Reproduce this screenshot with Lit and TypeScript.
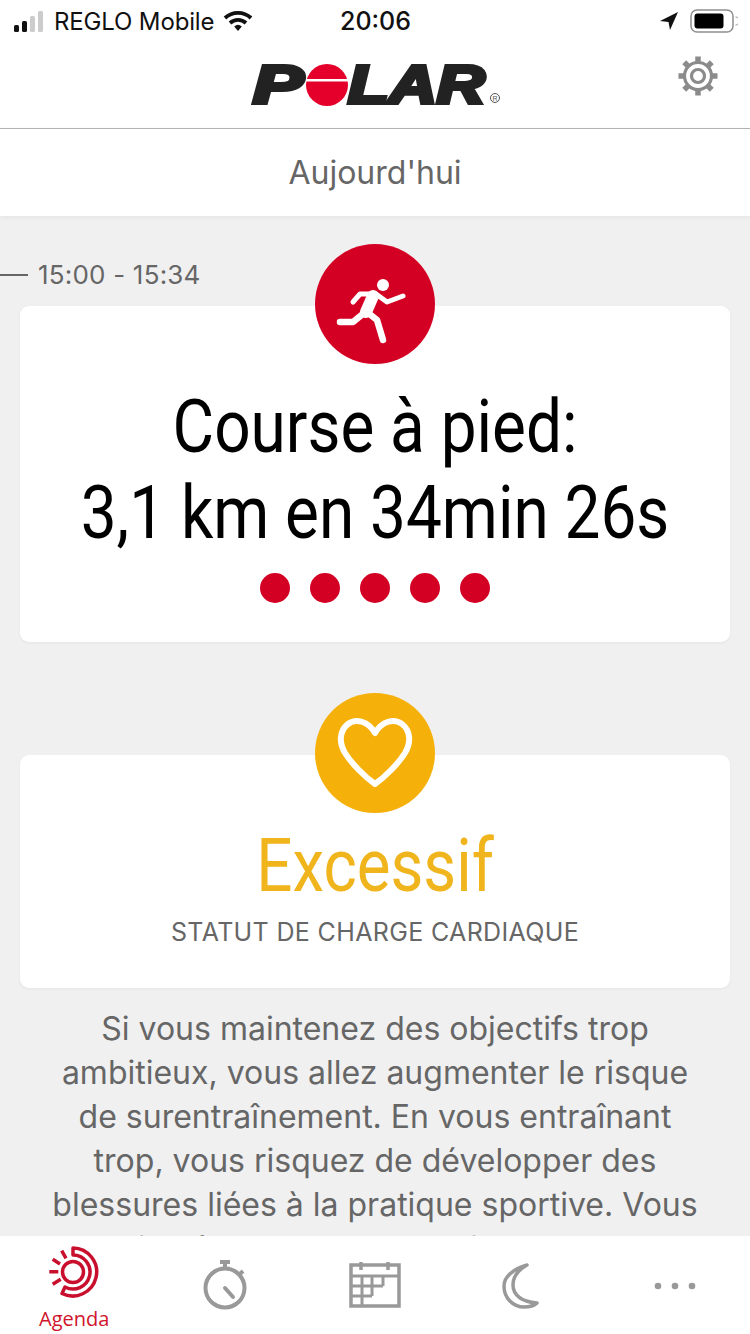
import { LitElement, html, css } from "lit";
import { customElement } from "lit/decorators.js";

const gearTeeth = () => {
  const parts: string[] = [];
  for (let i = 0; i < 8; i++) {
    const a = (i * Math.PI) / 4;
    const x1 = 24 + 14 * Math.sin(a), y1 = 24 - 14 * Math.cos(a);
    const x2 = 24 + 19.5 * Math.sin(a), y2 = 24 - 19.5 * Math.cos(a);
    parts.push(`M${x1.toFixed(1)} ${y1.toFixed(1)} L${x2.toFixed(1)} ${y2.toFixed(1)}`);
  }
  return parts.join(" ");
};

@customElement("app-root")
export class AppRoot extends LitElement {
  static styles = css`
    :host { display: block; width: 750px; height: 1334px; overflow: hidden; background: #fff; font-family: Inter, "Liberation Sans", sans-serif; }
    .page { display: flex; flex-direction: column; height: 1334px; }
    .status { height: 42px; flex: none; display: grid; grid-template-columns: 1fr auto 1fr; align-items: center; padding: 0 12px 0 13px; font-size: 24px; color: #111; }
    .status-left { display: flex; align-items: center; gap: 9px; }
    .status-left span { letter-spacing: -0.15px; }
    .status-right { display: flex; align-items: center; justify-content: flex-end; gap: 11px; }
    .clock { font-weight: 500; font-size: 25px; }
    .head { flex: none; position: relative; border-bottom: 1px solid #b5b5b5; display: flex; justify-content: center; align-items: flex-start; padding-top: 22px; height: 64px; }
    .logo { display: flex; align-items: center; height: 42px; width: 250px; position: relative; color: #222; font-family: "Liberation Sans", sans-serif; font-weight: 700; font-style: italic; font-size: 53px; line-height: 42px; -webkit-text-stroke: 4px #222; }
    .logo .p { flex: none; width: 53px; margin-left: 3px; transform: scaleX(1.42); transform-origin: left center; }
    .logo svg { flex: none; position: relative; }
    .logo .lar { flex: none; transform: scaleX(1.255); transform-origin: left center; }
    .logo .reg { position: absolute; left: 240px; top: 29px; width: 10px; height: 10px; border: 1px solid #555; border-radius: 50%; font: 7px/9px "Liberation Sans", sans-serif; color: #555; -webkit-text-stroke: 0; text-align: center; box-sizing: border-box; }
    .gear { position: absolute; right: 28px; top: 10px; }
    .today { flex: none; height: 87px; display: flex; align-items: center; justify-content: center; font-size: 32px; color: #666; box-shadow: 0 1px 6px rgba(0,0,0,.06); position: relative; z-index: 1; background: #fff; }
    .main { flex: 1; min-height: 0; overflow: hidden; background: #f0f0f1; display: flex; flex-direction: column; padding: 0 20px; }
    .main > * { flex: none; }
    .time { display: flex; align-items: center; gap: 10px; margin: 46px 0 18px -20px; font-size: 26px; color: #666; line-height: 26px; height: 26px; letter-spacing: .2px; }
    .time i { width: 28px; height: 2px; background: #666; display: block; }
    .card { position: relative; background: #fff; border-radius: 9px; box-shadow: 0 1px 3px rgba(0,0,0,.05); display: flex; flex-direction: column; align-items: center; }
    .badge { position: absolute; left: 295px; top: -62px; width: 120px; height: 120px; border-radius: 50%; }
    .red { background: #d40024; }
    .amber { background: #f5b00a; }
    .run { height: 336px; padding-top: 78px; box-sizing: border-box; }
    .big { font-family: Roboto, sans-serif; font-size: 74px; line-height: 86px; color: #000; transform: scaleX(.863); white-space: nowrap; text-align: center; }
    .dots { display: flex; gap: 20px; margin-top: 17px; }
    .dots b { width: 30px; height: 30px; border-radius: 50%; background: #d40024; display: block; }
    .load { margin-top: 113px; height: 233px; padding-top: 68px; box-sizing: border-box; }
    .excess { font-family: Roboto, sans-serif; font-size: 74px; line-height: 86px; color: #f0b41c; transform: scaleX(.86); }
    .sub { font-size: 25px; line-height: 30px; color: #666; margin-top: 8px; letter-spacing: .35px; }
    .para { margin: 19px 0 0; font-size: 32px; line-height: 44px; color: #666; text-align: center; white-space: nowrap; }
    .tabs { flex: none; height: 98px; background: #fff; display: grid; grid-template-columns: repeat(5, 1fr); position: relative; z-index: 1; }
    .tab { display: flex; flex-direction: column; align-items: center; position: relative; }
    .tab svg { display: block; }
    .tab .lbl { font-family: "Open Sans", sans-serif; font-size: 20px; line-height: 26px; color: #d0142c; position: absolute; top: 70px; left: 39px; }
  `;

  render() {
    return html`<div class="page">
      <div class="status">
        <div class="status-left">
          <svg width="32" height="24" viewBox="0 0 32 24">
            <rect x="1" y="16" width="5" height="7" rx="1.5" fill="#111"/><rect x="9" y="12" width="5" height="11" rx="1.5" fill="#111"/>
            <rect x="17" y="7" width="5" height="16" rx="1.5" fill="#ccc"/><rect x="25" y="2" width="5" height="21" rx="1.5" fill="#ccc"/>
          </svg>
          <span>REGLO Mobile</span>
          <svg width="30" height="22" viewBox="0 0 30 22" fill="none" stroke="#111" stroke-width="3.8">
            <path d="M2 8 a19 19 0 0 1 26 0"/><path d="M7 13 a12 12 0 0 1 16 0"/>
            <path d="M11.2 16.4 L15 21 L18.8 16.4 A6 6 0 0 0 11.2 16.4 Z" fill="#111" stroke="none"/>
          </svg>
        </div>
        <div class="clock">20:06</div>
        <div class="status-right">
          <svg width="20" height="20" viewBox="0 0 20 20"><path d="M19 1 L1 10 L9.5 11 L11 19 Z" fill="#111"/></svg>
          <svg width="48" height="24" viewBox="0 0 48 24" fill="none">
            <rect x="1" y="1" width="42" height="22" rx="6" stroke="#8f8f8f" stroke-width="1.5"/>
            <rect x="4.5" y="4.5" width="29" height="15" rx="3" fill="#000"/>
            <path d="M45.5 8 a4 4 0 0 1 0 8" stroke="#bbb" stroke-width="1.5"/>
          </svg>
        </div>
      </div>
      <div class="head">
        <div class="logo">
          <span class="p">P</span>
          <svg width="42" height="42" viewBox="0 0 42 42"><circle cx="21" cy="21" r="21" fill="#e4002b"/><rect x="0" y="15" width="42" height="2.5" fill="#fff"/></svg>
          <span class="lar">LAR</span>
          <span class="reg">R</span>
        </div>
        <svg class="gear" width="48" height="48" viewBox="0 0 48 48" fill="none" stroke="#8b8b8b">
          <circle cx="24" cy="24" r="13.5" stroke-width="3.2"/>
          <path d="${gearTeeth()}" stroke-width="5.5"/>
          <circle cx="24" cy="24" r="6.5" stroke-width="3.2"/>
        </svg>
      </div>
      <div class="today">Aujourd'hui</div>
      <div class="main">
        <div class="time"><i></i><span>15:00 - 15:34</span></div>
        <section class="card run">
          <div class="badge red">
            <svg width="120" height="120" viewBox="0 0 120 120" fill="none" stroke="#fff" stroke-linecap="round" stroke-linejoin="round">
              <circle cx="68" cy="41" r="6" fill="#fff" stroke="none"/>
              <path d="M38 58 L45 50 L61 50 L72 58 L88 52" stroke-width="5"/>
              <path d="M58 52 L51 68" stroke-width="12"/>
              <path d="M49 69 L38 78 L25 78" stroke-width="6.5"/>
              <path d="M52 68 L62 76 L68 96" stroke-width="6.5"/>
            </svg>
          </div>
          <div class="big">Course à pied:<br>3,1 km en 34min 26s</div>
          <div class="dots"><b></b><b></b><b></b><b></b><b></b></div>
        </section>
        <section class="card load">
          <div class="badge amber">
            <svg width="120" height="120" viewBox="0 0 120 120" fill="none">
              <path d="M60 40 C53 28 41 25 33 31 C24 38 24 50 30 60 C37 71 50 84 60 91 C70 84 83 71 90 60 C96 50 96 38 87 31 C79 25 67 28 60 40 Z" stroke="#fff" stroke-width="6" stroke-linejoin="round"/>
            </svg>
          </div>
          <div class="excess">Excessif</div>
          <div class="sub">STATUT DE CHARGE CARDIAQUE</div>
        </section>
        <p class="para">Si vous maintenez des objectifs trop<br>ambitieux, vous allez augmenter le risque<br>de surentraînement. En vous entraînant<br>trop, vous risquez de développer des<br>blessures liées à la pratique sportive. Vous<br>pourriez également ressentir des douleurs</p>
      </div>
      <nav class="tabs">
        <div class="tab">
          <svg width="150" height="70" viewBox="0 0 150 70" fill="none" stroke="#c8102e" stroke-width="3.5" stroke-linejoin="round">
            <circle cx="73" cy="36" r="10.5"/>
            <path d="M73 12 A24 24 0 1 1 62 57.5 L65 51 A17 17 0 1 0 73 19 Z"/>
            <path d="M61.7 14.7 L66 22.3 M52.7 23.3 L60 28 M49.3 35.7 L58.3 35.7 M52.7 48.3 L60.7 43.3"/>
          </svg>
          <span class="lbl">Agenda</span>
        </div>
        <div class="tab">
          <svg width="150" height="80" viewBox="0 0 150 80" fill="none" stroke="#999" stroke-width="4">
            <circle cx="75" cy="52" r="19.5"/>
            <path d="M75 32 V26 M70 26 H80 M89 39 L93 35" />
            <path d="M75 52 L83 61" stroke-linecap="round"/>
          </svg>
        </div>
        <div class="tab">
          <svg width="150" height="80" viewBox="0 0 150 80" fill="none" stroke="#999" stroke-width="3">
            <path d="M51 29 H99 V70 H51 Z" stroke-width="3.5"/>
            <path d="M61 26 V34 M88 26 V34" stroke-width="3.5"/>
            <path d="M51 40 H99 M51 50 H83 M51 60 H72 M62 40 V70 M72 40 V60 M83 40 V50" />
          </svg>
        </div>
        <div class="tab">
          <svg width="150" height="80" viewBox="0 0 150 80" fill="none" stroke="#999" stroke-width="3.5" stroke-linejoin="round">
            <path d="M77 29 C63 33 54 41 54 50 C54 62 63 71 74 71 C80 71 84 70 87 67 C73 66 63 60 63 49 C63 41 68 34 77 29 Z"/>
          </svg>
        </div>
        <div class="tab">
          <svg width="150" height="80" viewBox="0 0 150 80" fill="#999">
            <circle cx="58" cy="50" r="3.3"/><circle cx="75" cy="50" r="3.3"/><circle cx="92" cy="50" r="3.3"/>
          </svg>
        </div>
      </nav>
    </div>`;
  }
}
